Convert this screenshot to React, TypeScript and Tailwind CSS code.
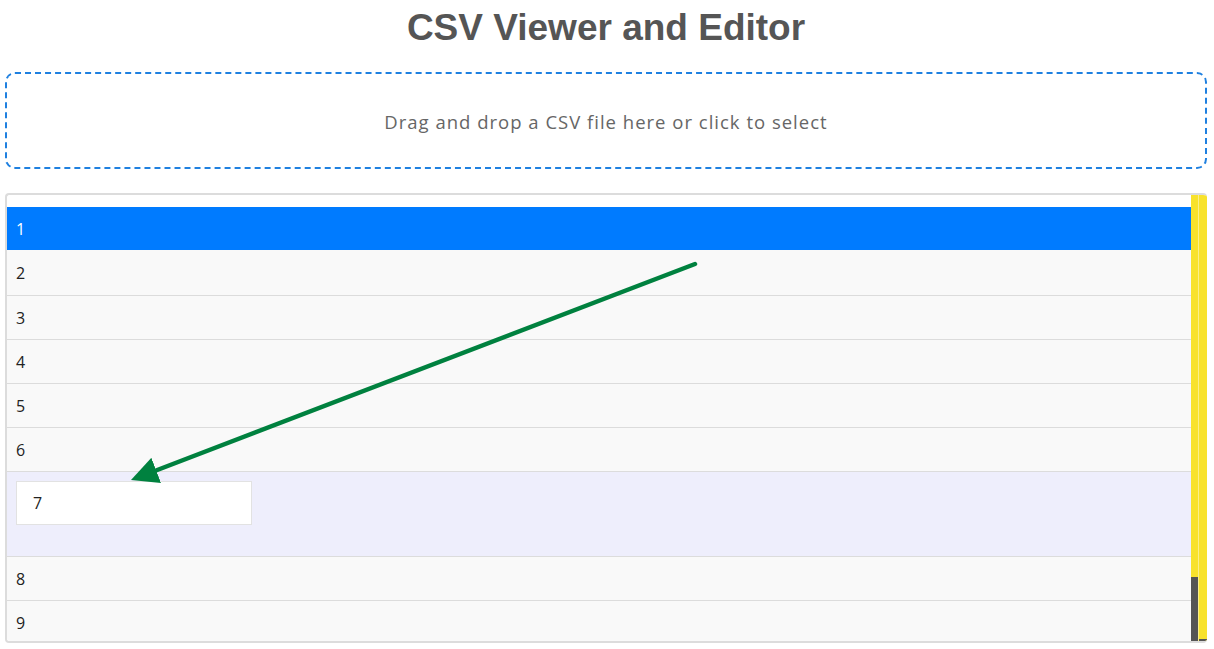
import React from 'react'

const rows = ['1', '2', '3', '4', '5', '6', '7', '8', '9']

export default function App() {
  return (
    <div className="relative min-h-screen bg-white pl-[5px] pr-[7px] font-['Open_Sans',sans-serif] text-[#222]">
      <h1 className="h-[72px] pt-[6px] text-center font-['Liberation_Sans',Arial,sans-serif] text-[37px] font-bold leading-[44px] text-[#555]">
        CSV Viewer and Editor
      </h1>

      <div className="flex h-[97px] cursor-pointer items-center justify-center rounded-[10px] border-2 border-dashed border-[#1f80e0] pt-[2px] text-[18.5px] tracking-[1px] text-[#666]">
        Drag and drop a CSV file here or click to select
      </div>

      <div className="mt-[24px] flex h-[450px] overflow-hidden rounded-[4px] border-2 border-r-0 border-[#dcdcdc]">
        <div className="flex-1 pt-[12px]">
          {rows.map((r, i) => {
            if (r === '7') {
              return (
                <div key={r} className="h-[85px] border-b border-[#dcdcdc] bg-[#eeeefc] px-[9px] pt-[9px]">
                  <input
                    defaultValue="7"
                    className="h-[44px] w-[236px] border border-[#e2e2e2] bg-white px-[16px] text-[16px] text-[#222] outline-none"
                  />
                </div>
              )
            }
            return (
              <div
                key={r}
                className={
                  i === 0
                    ? 'flex h-[43px] items-center bg-[#007bff] px-[9px] text-[16px] text-white'
                    : i === 1
                      ? 'flex h-[46px] items-center border-b border-[#dcdcdc] bg-[#f9f9f9] px-[9px] text-[16px]'
                      : 'flex h-[44px] items-center border-b border-[#dcdcdc] bg-[#f9f9f9] px-[9px] text-[16px]'
                }
              >
                {r}
              </div>
            )
          })}
        </div>
        <div className="flex w-[16px] bg-[#f8e22c]">
          <div className="flex w-[7px] flex-col justify-end">
            <div className="h-[64px] bg-[#555]" />
          </div>
          <div className="w-[1px] bg-[#fbee8a]" />
          <div className="flex w-[8px] flex-col justify-end">
            <div className="h-[2px] bg-[#555]" />
          </div>
        </div>
      </div>

      <svg className="pointer-events-none absolute left-0 top-0" width="1214" height="649">
        <defs>
          <marker id="head" markerWidth="6" markerHeight="6" refX="1" refY="3" orient="auto" markerUnits="strokeWidth">
            <path d="M0,0 L6,3 L0,6 z" fill="#00813f" />
          </marker>
        </defs>
        <line x1="695" y1="264" x2="152" y2="472" stroke="#00813f" strokeWidth="4.5" strokeLinecap="round" markerEnd="url(#head)" />
      </svg>
    </div>
  )
}
